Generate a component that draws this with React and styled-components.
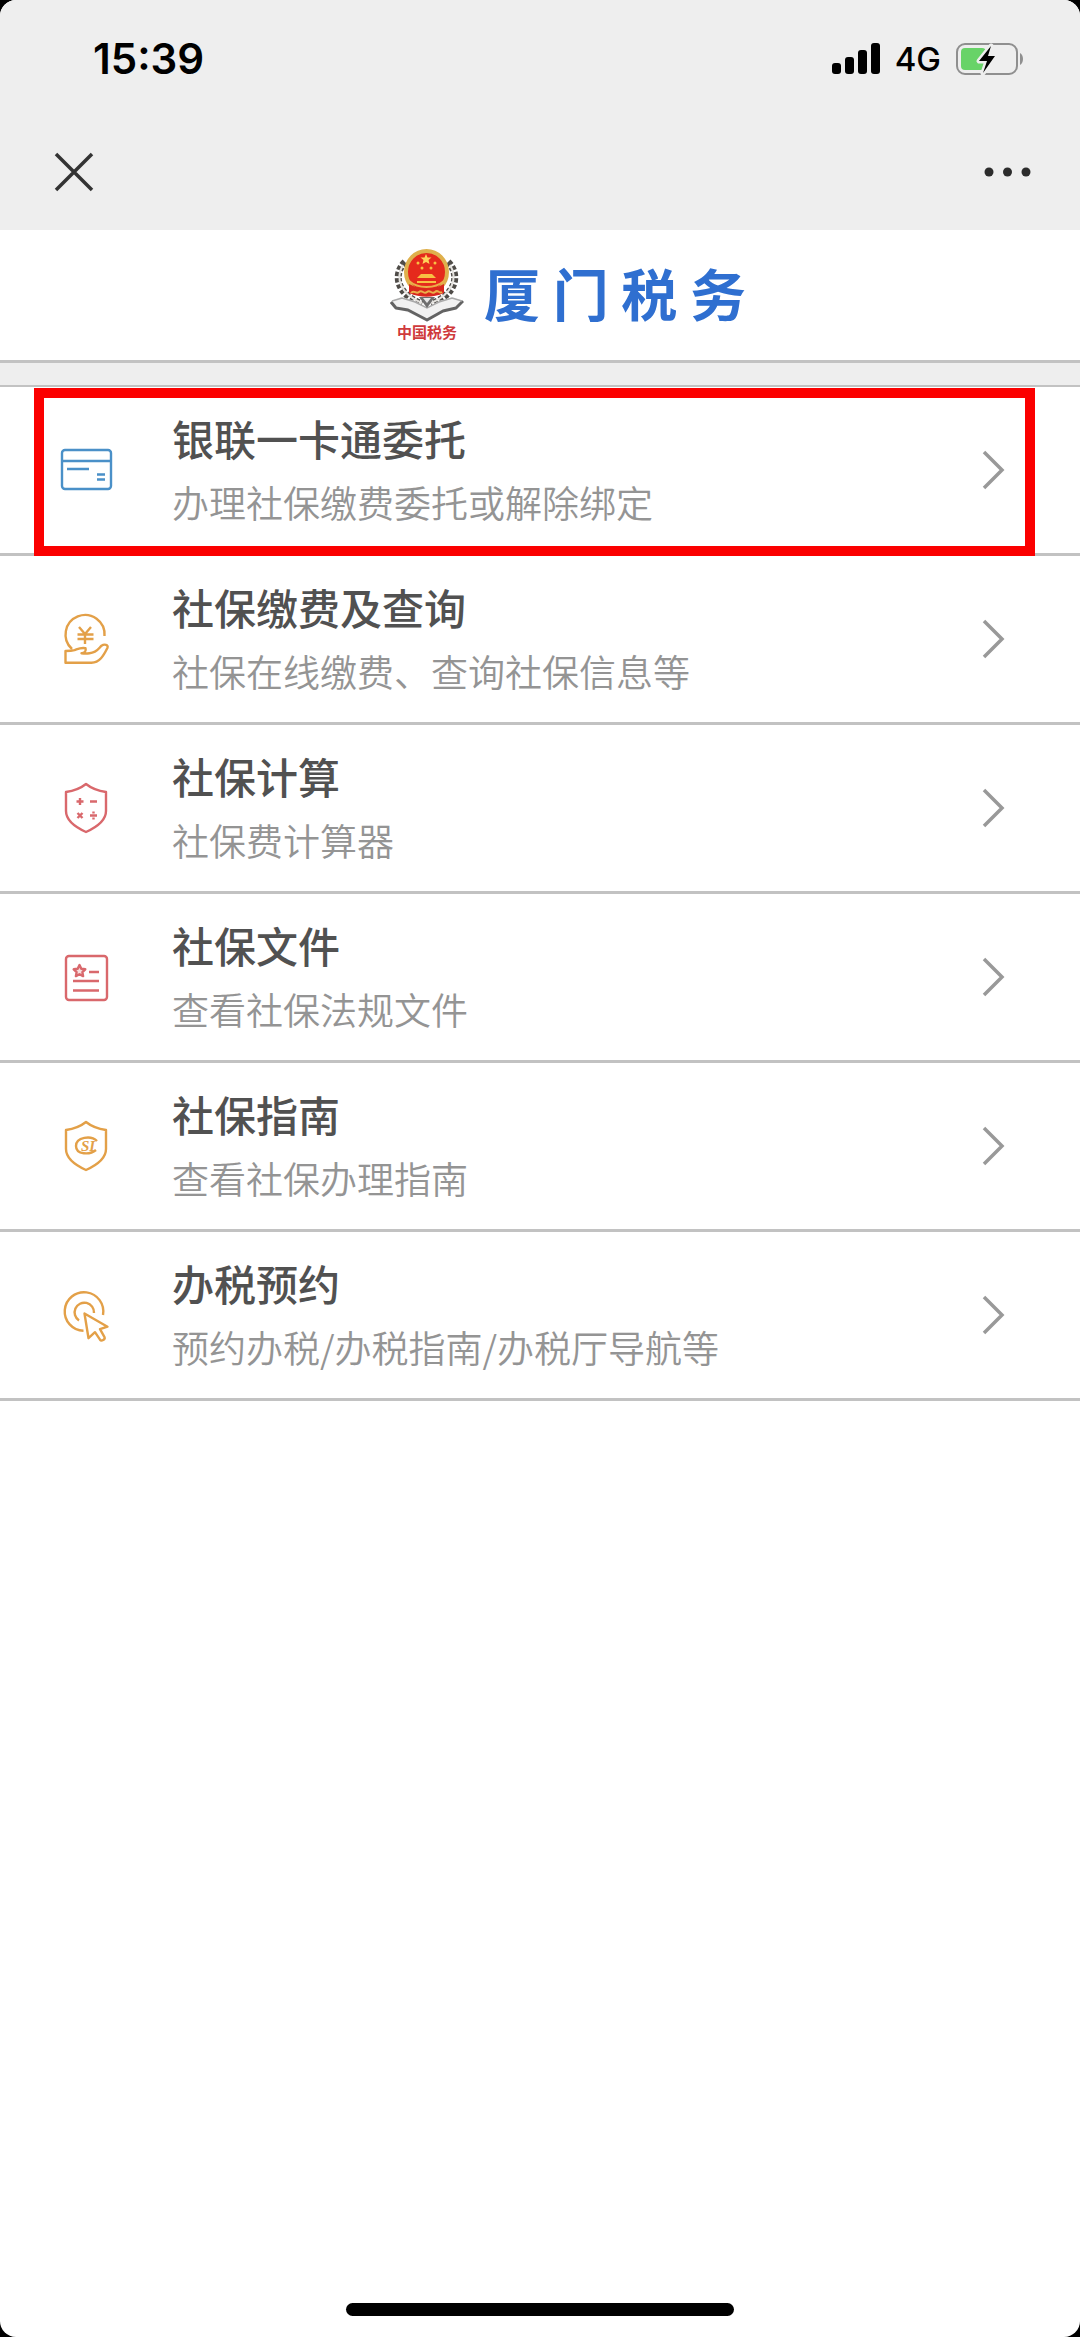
import React from 'react';
import styled, { createGlobalStyle } from 'styled-components';

const colors = {
  bar: '#eeeeee',
  line: '#c2c2c2',
  title: '#515151',
  text: '#949494',
  brand: '#2f6fd0',
  blue: '#4a90c8',
  orange: '#e3a048',
  red: '#d9686c',
};

const GlobalStyle = createGlobalStyle`
  * {
    box-sizing: border-box;
  }

  body {
    margin: 0;
    background: #000;
    font-family: 'Noto Sans CJK SC', sans-serif;
  }
`;

const Screen = styled.div`
  display: flex;
  flex-direction: column;
  min-height: 100vh;
  background: #fff;
  border-radius: 16px;
  overflow: hidden;
`;

const TopBar = styled.header`
  background: ${colors.bar};
`;

const StatusBar = styled.div`
  display: flex;
  align-items: center;
  justify-content: space-between;
  padding: 37px 55px 0 93px;
  font-family: Inter, sans-serif;
  line-height: 44px;
`;

const Clock = styled.time`
  font-size: 42px;
  font-weight: 600;
`;

const StatusIcons = styled.div`
  display: flex;
  align-items: center;
  gap: 14px;
`;

const Network = styled.span`
  font-size: 33px;
  font-weight: 500;
`;

const NavBar = styled.nav`
  display: flex;
  align-items: center;
  justify-content: space-between;
  padding: 69px 46px 36px 50px;
`;

const NavButton = styled.button`
  display: flex;
  padding: 0;
  border: 0;
  background: none;
  cursor: pointer;
`;

const Banner = styled.div`
  display: flex;
  align-items: center;
  justify-content: center;
  gap: 20px;
  height: 133px;
  padding-left: 56px;
  border-bottom: 3px solid ${colors.line};
`;

const Emblem = styled.div`
  display: flex;
  flex-direction: column;
  align-items: center;
`;

const EmblemName = styled.span`
  color: #cf3a3c;
  font-size: 15px;
  font-weight: 700;
  line-height: 20px;
`;

const BrandName = styled.h1`
  margin: 0;
  padding-bottom: 6px;
  color: ${colors.brand};
  font-size: 56px;
  font-weight: 700;
  line-height: 72px;
`;

const Divider = styled.div`
  height: 24px;
  background: ${colors.bar};
  border-bottom: 2px solid ${colors.line};
`;

const Menu = styled.ul`
  flex: 1;
  margin: 0;
  padding: 0;
  list-style: none;
`;

const MenuItem = styled.li`
  position: relative;
  border-bottom: 3px solid ${colors.line};
`;

const MenuLink = styled.a`
  display: flex;
  align-items: center;
  padding: 19px 75px 19px 58px;
  color: inherit;
  text-decoration: none;
`;

const MenuText = styled.div`
  flex: 1;
  margin-left: 58px;
`;

const MenuTitle = styled.h2`
  margin: 0;
  color: ${colors.title};
  font-size: 42px;
  font-weight: 500;
  line-height: 64px;
`;

const MenuHint = styled.p`
  margin: 0;
  color: ${colors.text};
  font-size: 37px;
  font-weight: 350;
  line-height: 64px;
`;

const Highlight = styled.div`
  position: absolute;
  top: 1px;
  right: 45px;
  bottom: -3px;
  left: 34px;
  border: 10px solid #fb0000;
  pointer-events: none;
`;

const HomeIndicator = styled.div`
  align-self: center;
  width: 36%;
  height: 13px;
  margin-bottom: 21px;
  border-radius: 7px;
  background: #000;
`;

const SignalIcon = () => (
  <svg width="49" height="32" viewBox="0 0 49 32" aria-hidden="true">
    <rect x="0" y="20" width="9" height="11" rx="3" />
    <rect x="13" y="14" width="9" height="17" rx="3" />
    <rect x="26" y="7" width="9" height="24" rx="3" />
    <rect x="39" y="0" width="9" height="31" rx="3" />
  </svg>
);

const BatteryIcon = () => (
  <svg width="70" height="34" viewBox="0 0 70 34" aria-hidden="true">
    <rect x="2" y="2" width="60" height="30" rx="8" fill="none" stroke="#8f8f8f" strokeWidth="2" />
    <path d="M65 11c4 2 4 10 0 12z" fill="#8f8f8f" />
    <rect x="6" y="6" width="25" height="22" rx="4" fill="#68d368" />
    <path
      d="M36 4L24 19h8l-4 12 12-17h-7z"
      fill="#000"
      stroke={colors.bar}
      strokeWidth="5"
      strokeLinejoin="round"
      paintOrder="stroke"
    />
  </svg>
);

const CloseIcon = () => (
  <svg width="48" height="44" viewBox="0 0 48 44" aria-hidden="true">
    <path d="M6 4l36 36M42 4L6 40" stroke="#333" strokeWidth="3.5" />
  </svg>
);

const MoreIcon = () => (
  <svg width="54" height="44" viewBox="0 0 54 44" aria-hidden="true" fill="#2c2c2c">
    <circle cx="9" cy="22" r="4.5" />
    <circle cx="27.500" cy="22" r="4.5" />
    <circle cx="46" cy="22" r="4.5" />
  </svg>
);

const EmblemIcon = () => (
  <svg width="74" height="74" viewBox="0 0 74 74" aria-hidden="true" fill="none">
    {/* ears of grain on both sides */}
    <path d="M15 14C3 26 6 46 32 56" stroke="#4f4c48" strokeWidth="7" strokeDasharray="4 2" />
    <path d="M58 14c12 12 9 32-17 42" stroke="#4f4c48" strokeWidth="7" strokeDasharray="4 2" />
    <path d="M13 17C5 30 10 46 32 55M60 17c8 13 3 29-19 38" stroke="#e4e2de" strokeWidth="2" />
    {/* open book */}
    <path d="M1 53l10-4 14 4 12 7 12-7 14-4 10 4-8 8-12 3-16 9-18-8-10-4z" fill="#f1f1f1" />
    <path d="M1 54l5 6 12 2 19 10 16-9 13-3 7-7" stroke="#636363" strokeWidth="3" strokeLinejoin="round" />
    <path d="M2 53l10-3 13 4 12 6 12-6 13-4 10 3" stroke="#aaa" strokeWidth="1.5" />
    <path d="M29 49l8 11 8-11z" fill="#6e6e6e" />
    <path d="M33 50l4 5 4-5z" fill="#e6e6e6" />
    <ellipse cx="36.500" cy="24" rx="20.500" ry="21" fill="#e52a1c" stroke="#dfb04c" strokeWidth="4" />
    <path d="M19 36c11 6 24 6 35 0v9c-11 5-24 5-35 0z" fill="#d8271d" />
    <path d="M36 6l1.500 3.500h4l-3 2.500 1 4-3.500-2-3.500 2 1-4-3-2.500h4z" fill="#ffd25a" />
    <path d="M27 30h19l-4-4H31zM27 35h19v-2H27z" fill="#f8c043" />
    <path d="M19 33c9 8 26 8 35 0M21 45c3-4 5 2 8-1s5 3 8 0 5 3 8 0 4 2 7 0" stroke="#eab04a" strokeWidth="2" />
    <g fill="#f8c043">
      <circle cx="28" cy="15" r="1.500" />
      <circle cx="45" cy="15" r="1.500" />
      <circle cx="32" cy="20" r="1.500" />
      <circle cx="41" cy="20" r="1.500" />
    </g>
  </svg>
);

const MenuIcon = ({ color, children }) => (
  <svg
    width="56"
    height="56"
    viewBox="0 0 56 56"
    fill="none"
    stroke={color}
    strokeWidth="2.400"
    strokeLinejoin="round"
    aria-hidden="true"
  >
    {children}
  </svg>
);

const SHIELD = 'M28 4C23 8 15 11 8 12v19c0 9 9 16 20 21 11-5 20-12 20-21V12C41 11 33 8 28 4z';

const CardIcon = () => (
  <MenuIcon color={colors.blue}>
    <rect x="4" y="8" width="49" height="39" rx="3" />
    <path d="M4 19h49M9 27h22M39 32.500h8M39 37.500h8" />
  </MenuIcon>
);

const PaymentIcon = () => (
  <MenuIcon color={colors.orange}>
    <path d="M46.500 25A19.500 19.500 0 1 0 14 38" />
    <path d="M21 16l6 7 6-7M27 23v10M19.500 23.500h16M19.500 28h16" />
    <path d="M7.500 40v11.700h26c8 0 12-7 16-15 1-3-3-4-6-2-3 3-5 7-12 7.500-3 .5-5 .5-8 0 3 0 5-2 4-5-5-1-8 1-11 2-3 .8-6 .8-9 .8z" />
  </MenuIcon>
);

const CalculatorIcon = () => (
  <MenuIcon color={colors.red}>
    <path d={SHIELD} />
    <path d="M18.500 21.500h7M22 18v7M32 21.500h7M19.500 33l5 5M24.500 33l-5 5M32 35.500h7" />
    <path d="M35.500 31.500v2M35.500 37.500v2" />
  </MenuIcon>
);

const DocumentIcon = () => (
  <MenuIcon color={colors.red}>
    <rect x="8" y="7" width="41" height="44" rx="3" />
    <path d="M21.500 16l1.800 3.700 4 .6-2.900 2.800.7 4-3.600-1.900-3.600 1.900.7-4-2.900-2.800 4-.6z" fill="#f8dede" />
    <path d="M31 23h10M15 32h26M15 41.500h26" />
  </MenuIcon>
);

const GuideIcon = () => (
  <MenuIcon color={colors.orange}>
    <path d={SHIELD} />
    <path d="M39 23c-6-6-21-4-21 5 0 9 14 9 20 4" />
    <text
      x="23"
      y="33"
      fill={colors.orange}
      stroke="none"
      fontFamily="Liberation Serif, serif"
      fontSize="15"
      fontWeight="700"
      fontStyle="italic"
    >
      SI
    </text>
  </MenuIcon>
);

const BookingIcon = () => (
  <MenuIcon color={colors.orange}>
    <path d="M45 28A19.300 19.300 0 1 0 25.500 43.800" />
    <path d="M36 26a9.700 9.700 0 1 0-15 7.500" />
    <path d="M26.500 26.500l23 13.200-7.500 2.500 4.500 8c1 2-3 4.500-4.500 2.500l-5-7.500-6.500 6z" />
  </MenuIcon>
);

const ChevronIcon = () => (
  <svg width="24" height="40" viewBox="0 0 24 40" fill="none" aria-hidden="true">
    <path d="M3 2l18 18L3 38" stroke="#999" strokeWidth="3.500" />
  </svg>
);

const menuItems = [
  { title: '银联一卡通委托', hint: '办理社保缴费委托或解除绑定', Icon: CardIcon, highlighted: true },
  { title: '社保缴费及查询', hint: '社保在线缴费、查询社保信息等', Icon: PaymentIcon },
  { title: '社保计算', hint: '社保费计算器', Icon: CalculatorIcon },
  { title: '社保文件', hint: '查看社保法规文件', Icon: DocumentIcon },
  { title: '社保指南', hint: '查看社保办理指南', Icon: GuideIcon },
  { title: '办税预约', hint: '预约办税/办税指南/办税厅导航等', Icon: BookingIcon },
];

const App = () => {
  return (
    <>
      <GlobalStyle />
      <Screen lang="zh-CN">
        <TopBar>
          <StatusBar>
            <Clock>15:39</Clock>
            <StatusIcons>
              <SignalIcon />
              <Network>4G</Network>
              <BatteryIcon />
            </StatusIcons>
          </StatusBar>
          <NavBar>
            <NavButton type="button" aria-label="关闭">
              <CloseIcon />
            </NavButton>
            <NavButton type="button" aria-label="更多">
              <MoreIcon />
            </NavButton>
          </NavBar>
        </TopBar>

        <Banner>
          <Emblem>
            <EmblemIcon />
            <EmblemName>中国税务</EmblemName>
          </Emblem>
          <BrandName>厦 门 税 务</BrandName>
        </Banner>
        <Divider />

        <Menu>
          {menuItems.map(({ title, hint, Icon, highlighted }) => (
            <MenuItem key={title}>
              <MenuLink href="#">
                <Icon />
                <MenuText>
                  <MenuTitle>{title}</MenuTitle>
                  <MenuHint>{hint}</MenuHint>
                </MenuText>
                <ChevronIcon />
              </MenuLink>
              {highlighted && <Highlight />}
            </MenuItem>
          ))}
        </Menu>
        <HomeIndicator />
      </Screen>
    </>
  );
};

export default App;
